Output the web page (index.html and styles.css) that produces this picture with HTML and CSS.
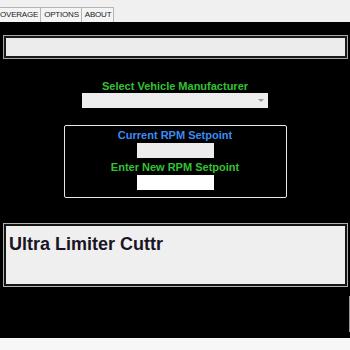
FILE: index.html
```html
<!DOCTYPE html>
<html lang="en">
<head>
    <meta charset="UTF-8">
    <meta name="viewport" content="width=device-width, initial-scale=1.0">
    <title>Ultra Limiter Cuttr</title>
    <link rel="stylesheet" href="styles.css">
</head>
<body>
    <!-- Tab strip -->
    <div class="tabs">
        <div class="tab tab-first">OVERAGE</div>
        <div class="tab">OPTIONS</div>
        <div class="tab">ABOUT</div>
    </div>

    <div class="screen">
        <div class="status-box"></div>

        <div class="label label-green">Select Vehicle Manufacturer</div>
        <div class="select-box">
            <span class="select-arrow"></span>
        </div>

        <!-- RPM setpoint panel -->
        <div class="rpm-box">
            <div class="label label-blue">Current RPM Setpoint</div>
            <div class="field field-readonly"></div>
            <div class="label label-green">Enter New RPM Setpoint</div>
            <div class="field"></div>
        </div>

        <div class="title-panel">
            <div class="title">Ultra Limiter Cuttr</div>
        </div>

        <div class="edge-mark"></div>
    </div>
</body>
</html>
```

FILE: styles.css
```css
/* General styling */
body {
    margin: 0;
    font-family: 'Liberation Sans', Arial, sans-serif;
    background-color: #f7f7f7;
}

/* Tab strip */
.tabs {
    display: flex;
    height: 22px;
    box-sizing: border-box;
    padding-top: 7px;
    background-color: #f0f0f0;
}

.tab {
    font-size: 8px;
    letter-spacing: -0.2px;
    color: #222;
    padding: 2px 2px 0 3px;
    border: 1px solid #b5b5b5;
    border-bottom: none;
    border-left: none;
    background-color: #f4f4f4;
}

.tab-first {
    padding-left: 0;
}

/* Black main area */
.screen {
    background-color: #000;
    height: 316px;
    display: flex;
    flex-direction: column;
    align-items: center;
}

.status-box {
    align-self: stretch;
    margin: 14px 3px 0 4px;
    height: 18px;
    background-color: #ececec;
    border: 2px solid #1a1a1a;
    box-shadow: 0 0 0 1px #a8a8a8;
}

.label {
    font-size: 11px;
    font-weight: bold;
    text-align: center;
}

.label-green {
    color: #34c234;
}

.label-blue {
    color: #3c8cf5;
}

.screen > .label-green {
    margin-top: 22px;
}

.select-box {
    position: relative;
    width: 186px;
    height: 15px;
    margin-top: 1px;
    background-color: #ededed;
}

.select-arrow {
    position: absolute;
    right: 4px;
    top: 6px;
    border-left: 3px solid transparent;
    border-right: 3px solid transparent;
    border-top: 3px solid #999;
}

/* RPM panel */
.rpm-box {
    width: 221px;
    height: 68px;
    margin-top: 17px;
    border: 1px solid #e8e8e8;
    border-radius: 2px;
    display: flex;
    flex-direction: column;
    align-items: center;
    padding-top: 3px;
}

.field {
    width: 77px;
    height: 15px;
    margin: 2px 0 3px 0;
    background-color: #fff;
}

.field-readonly {
    background-color: #ececec;
}

/* Bottom title panel */
.title-panel {
    align-self: stretch;
    margin: 26px 3px 0 4px;
    height: 58px;
    background-color: #efefef;
    border: 2px solid #151515;
    box-shadow: 0 0 0 1px #b0b0b0;
}

.title {
    font-size: 18px;
    font-weight: bold;
    color: #1a1424;
    padding: 8px 0 0 3px;
}

.edge-mark {
    align-self: flex-end;
    width: 1px;
    height: 36px;
    margin-top: 10px;
    background-color: #9a9a9a;
}
```
